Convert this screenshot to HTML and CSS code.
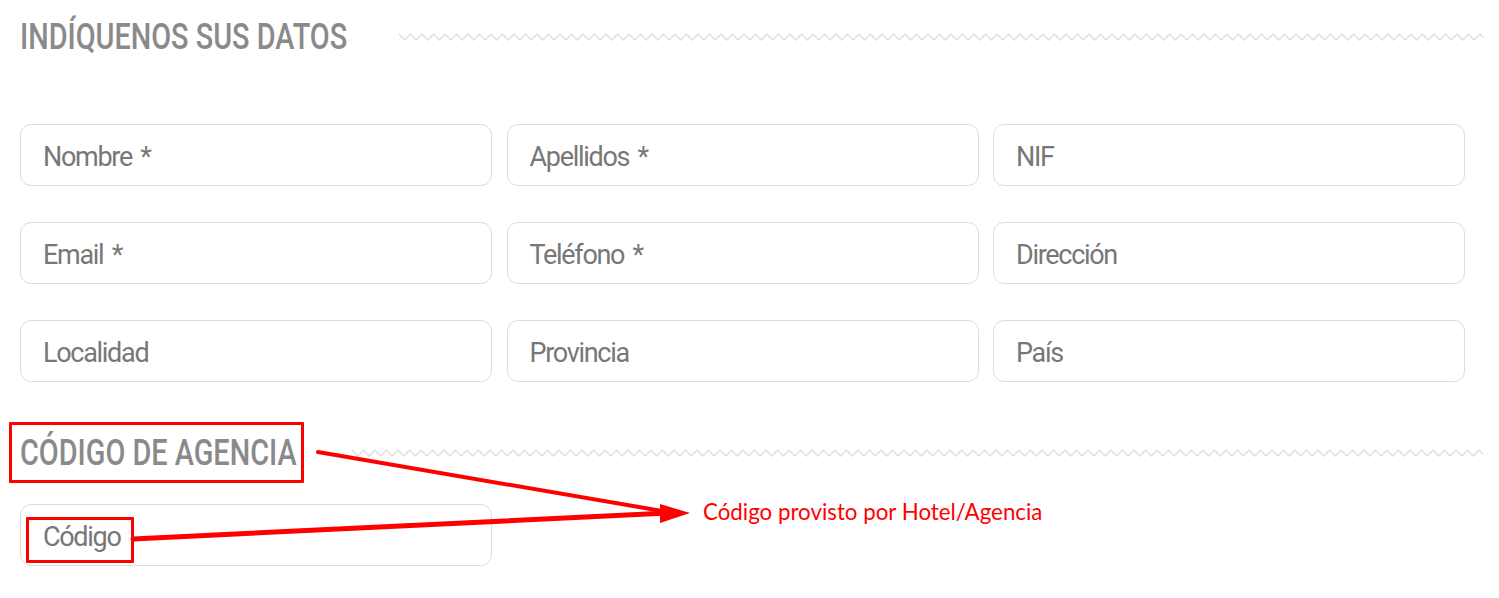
FILE: index.html
```html
<!DOCTYPE html>
<html lang="es">
<head>
<meta charset="utf-8">
<title>Indíquenos sus datos</title>
<link rel="stylesheet" href="styles.css">
</head>
<body>
<div class="page">
  <section class="block block-datos">
    <div class="heading-row">
      <h2 class="heading heading-datos"><span class="heading-text">INDÍQUENOS SUS DATOS</span></h2>
      <svg class="zigzag" aria-hidden="true">
        <defs>
          <pattern id="zz1" width="11.5" height="8" patternUnits="userSpaceOnUse">
            <polyline points="0,1 5.75,7 11.5,1" fill="none" stroke="#dcdcdc" stroke-width="1.3"/>
          </pattern>
        </defs>
        <rect width="100%" height="8" fill="url(#zz1)"/>
      </svg>
    </div>
    <div class="fields">
      <div class="field">Nombre *</div>
      <div class="field">Apellidos *</div>
      <div class="field">NIF</div>
      <div class="field">Email *</div>
      <div class="field">Teléfono *</div>
      <div class="field">Dirección</div>
      <div class="field">Localidad</div>
      <div class="field">Provincia</div>
      <div class="field">País</div>
    </div>
  </section>

  <section class="block block-codigo">
    <div class="heading-row">
      <h2 class="heading heading-codigo"><span class="heading-text">CÓDIGO DE AGENCIA</span></h2>
      <svg class="zigzag" aria-hidden="true">
        <defs>
          <pattern id="zz2" width="11.5" height="8" patternUnits="userSpaceOnUse">
            <polyline points="0,1 5.75,7 11.5,1" fill="none" stroke="#dcdcdc" stroke-width="1.3"/>
          </pattern>
        </defs>
        <rect width="100%" height="8" fill="url(#zz2)"/>
      </svg>
    </div>
    <div class="fields">
      <div class="field">Código</div>
    </div>
  </section>

  <div class="note">Código provisto por Hotel/Agencia</div>

  <div class="mark mark-heading"></div>
  <div class="mark mark-field"></div>
  <svg class="arrows" width="1499" height="598" aria-hidden="true">
    <line x1="318" y1="452" x2="668" y2="512" stroke="#ff0000" stroke-width="4" stroke-linecap="round"/>
    <line x1="133" y1="539" x2="668" y2="513" stroke="#ff0000" stroke-width="5" stroke-linecap="round"/>
    <polygon points="660,504 690,513 660,523" fill="#ff0000"/>
  </svg>
</div>
</body>
</html>
```

FILE: styles.css
```css
* { box-sizing: border-box; }

html, body {
  margin: 0;
  padding: 0;
  background: #ffffff;
}

.page {
  position: relative;
  width: 1499px;
  height: 598px;
  padding: 22px 16px 0 20px;
  font-family: "Roboto", "Liberation Sans", sans-serif;
  overflow: hidden;
}

.heading-row {
  display: flex;
  align-items: center;
  height: 30px;
}

.heading {
  margin: 0;
  flex: none;
  font-size: 37px;
  font-weight: 500;
  line-height: 30px;
  color: #8a8a8a;
  white-space: nowrap;
}

.heading-text {
  display: inline-block;
  transform: scaleX(0.78);
  transform-origin: left center;
}

.heading-datos {
  width: 327px;
}

.heading-codigo {
  width: 276px;
}

.zigzag {
  flex: 1;
  height: 8px;
  margin-left: 52px;
}

.heading-codigo + .zigzag {
  margin-left: 56px;
}

.fields {
  display: grid;
  grid-template-columns: repeat(3, 472px);
  column-gap: 14.5px;
  row-gap: 36px;
  margin-top: 72px;
}

.field {
  height: 62px;
  border: 1px solid #dddddd;
  border-radius: 11px;
  padding: 3px 0 0 22px;
  display: flex;
  align-items: center;
  font-size: 27px;
  letter-spacing: -1.3px;
  word-spacing: 3px;
  color: #777777;
  background: #ffffff;
  white-space: pre;
}

.block-codigo {
  margin-top: 56px;
}

.block-codigo .fields {
  margin-top: 36px;
}

.note {
  position: absolute;
  left: 703px;
  top: 498px;
  font-family: "Lato", "Liberation Sans", sans-serif;
  font-size: 22.3px;
  color: #ff0000;
  white-space: nowrap;
}

.mark {
  position: absolute;
  border: 3px solid #ff0000;
  border-radius: 1px;
}

.mark-heading {
  left: 9px;
  top: 422px;
  width: 295px;
  height: 61px;
}

.mark-field {
  left: 26px;
  top: 517px;
  width: 108px;
  height: 46px;
}

.arrows {
  position: absolute;
  left: 0;
  top: 0;
  pointer-events: none;
}
```
